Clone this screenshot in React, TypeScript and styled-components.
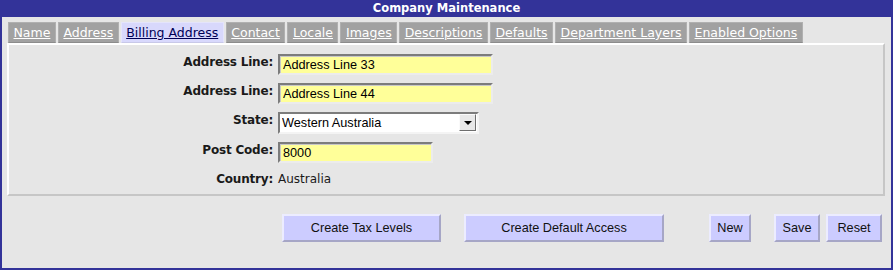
import React from 'react';
import styled, { createGlobalStyle } from 'styled-components';

const GlobalStyle = createGlobalStyle`
  html, body {
    margin: 0;
    padding: 0;
    background: #e6e6e6;
  }
  * {
    box-sizing: border-box;
  }
`;

const Frame = styled.div`
  width: 893px;
  height: 270px;
  border: 2px solid #333399;
  border-top: 0;
  background: #e6e6e6;
  display: flex;
  flex-direction: column;
`;

const TitleBar = styled.div`
  height: 17px;
  background: #333399;
  color: #fff;
  font-family: 'DejaVu Sans', sans-serif;
  font-weight: bold;
  font-size: 11.5px;
  line-height: 16px;
  text-align: center;
`;

const Body = styled.div`
  padding: 5px 6px 0 5px;
`;

const TabBar = styled.div`
  display: flex;
  gap: 2px;
  margin-left: 1px;
`;

const Tab = styled.a<{ $active?: boolean }>`
  display: block;
  height: 21px;
  padding: 0 4.5px;
  border: 1px solid ${(p) => (p.$active ? '#e4e4fc' : '#b0b0b0')};
  border-bottom-color: ${(p) => (p.$active ? '#c8c8e8' : '#8c8c8c')};
  background: ${(p) => (p.$active ? '#d8d8fc' : '#a1a1a1')};
  color: ${(p) => (p.$active ? '#000055' : '#fff')};
  font-family: 'DejaVu Sans', sans-serif;
  font-size: 12.5px;
  line-height: 19px;
  text-decoration: underline;
  white-space: nowrap;
  cursor: pointer;
`;

const Panel = styled.div`
  border: 2px solid;
  border-color: #fff #c6c6c6 #c6c6c6 #fff;
  padding: 9px 0 7px 0;
`;

const FormGrid = styled.div`
  display: grid;
  grid-template-columns: 264px auto;
  column-gap: 5px;
  row-gap: 8px;
  align-items: start;
`;

const Label = styled.div`
  text-align: right;
  font-family: 'DejaVu Sans', sans-serif;
  font-weight: bold;
  font-size: 12px;
  letter-spacing: -0.2px;
  line-height: 16px;
  color: #1a1a1a;
`;

const TextInput = styled.input<{ $width: number }>`
  display: block;
  width: ${(p) => p.$width}px;
  height: 21px;
  margin: 0;
  padding: 0 3px;
  background: #ffff99;
  border: 2px solid;
  border-color: #7c7c7c #ececec #ececec #7c7c7c;
  box-shadow: inset 1px 1px 0 #c8c8c8;
  font-family: 'Liberation Sans', Arial, sans-serif;
  font-size: 12.7px;
  color: #000;
  outline: none;
`;

const SelectBox = styled.div`
  display: flex;
  width: 201px;
  height: 22px;
  background: #fff;
  border: 2px solid;
  border-color: #7c7c7c #f4f4f4 #f4f4f4 #7c7c7c;
`;

const SelectField = styled.select`
  flex: 1;
  appearance: none;
  border: 0;
  margin: 0;
  padding: 0 2px;
  background: transparent;
  font-family: 'Liberation Sans', Arial, sans-serif;
  font-size: 12.7px;
  color: #000;
  outline: none;
`;

const ArrowButton = styled.span`
  display: flex;
  align-items: center;
  justify-content: center;
  width: 17px;
  margin: 0 1px 1px 0;
  background: #e8e8e8;
  border: 1px solid;
  border-color: #fafafa #6e6e6e #6e6e6e #fafafa;

  &::after {
    content: '';
    border-left: 4px solid transparent;
    border-right: 4px solid transparent;
    border-top: 4px solid #000;
    margin-top: 1px;
  }
`;

const Value = styled.div`
  font-family: 'DejaVu Sans', sans-serif;
  font-size: 12px;
  line-height: 16px;
  color: #1a1a1a;
`;

const ButtonRow = styled.div`
  display: flex;
  margin-top: 18px;
`;

const Button = styled.button<{ $width: number; $ml: number }>`
  width: ${(p) => p.$width}px;
  height: 28px;
  margin: 0 0 0 ${(p) => p.$ml}px;
  padding: 0;
  background: #ccccff;
  border: 2px solid;
  border-color: #ececff #a6a6c6 #a6a6c6 #ececff;
  font-family: 'Liberation Sans', Arial, sans-serif;
  font-size: 12.7px;
  color: #111;
  cursor: pointer;
`;

const tabs = [
  'Name',
  'Address',
  'Billing Address',
  'Contact',
  'Locale',
  'Images',
  'Descriptions',
  'Defaults',
  'Department Layers',
  'Enabled Options',
];

const buttons = [
  { label: 'Create Tax Levels', width: 159, ml: 275 },
  { label: 'Create Default Access', width: 200, ml: 23 },
  { label: 'New', width: 42, ml: 45 },
  { label: 'Save', width: 46, ml: 23 },
  { label: 'Reset', width: 56, ml: 6 },
];

const App = () => {
  return (
    <>
      <GlobalStyle />
      <Frame>
        <TitleBar>Company Maintenance</TitleBar>
        <Body>
          <TabBar>
            {tabs.map((t) => (
              <Tab key={t} $active={t === 'Billing Address'}>
                {t}
              </Tab>
            ))}
          </TabBar>
          <Panel>
            <FormGrid>
              <Label>Address Line:</Label>
              <TextInput $width={215} defaultValue="Address Line 33" />
              <Label>Address Line:</Label>
              <TextInput $width={215} defaultValue="Address Line 44" />
              <Label>State:</Label>
              <SelectBox>
                <SelectField defaultValue="WA">
                  <option value="WA">Western Australia</option>
                  <option value="NSW">New South Wales</option>
                  <option value="VIC">Victoria</option>
                </SelectField>
                <ArrowButton />
              </SelectBox>
              <Label>Post Code:</Label>
              <TextInput $width={155} defaultValue="8000" />
              <Label>Country:</Label>
              <Value>Australia</Value>
            </FormGrid>
          </Panel>
          <ButtonRow>
            {buttons.map((b) => (
              <Button key={b.label} $width={b.width} $ml={b.ml}>
                {b.label}
              </Button>
            ))}
          </ButtonRow>
        </Body>
      </Frame>
    </>
  );
};

export default App;
